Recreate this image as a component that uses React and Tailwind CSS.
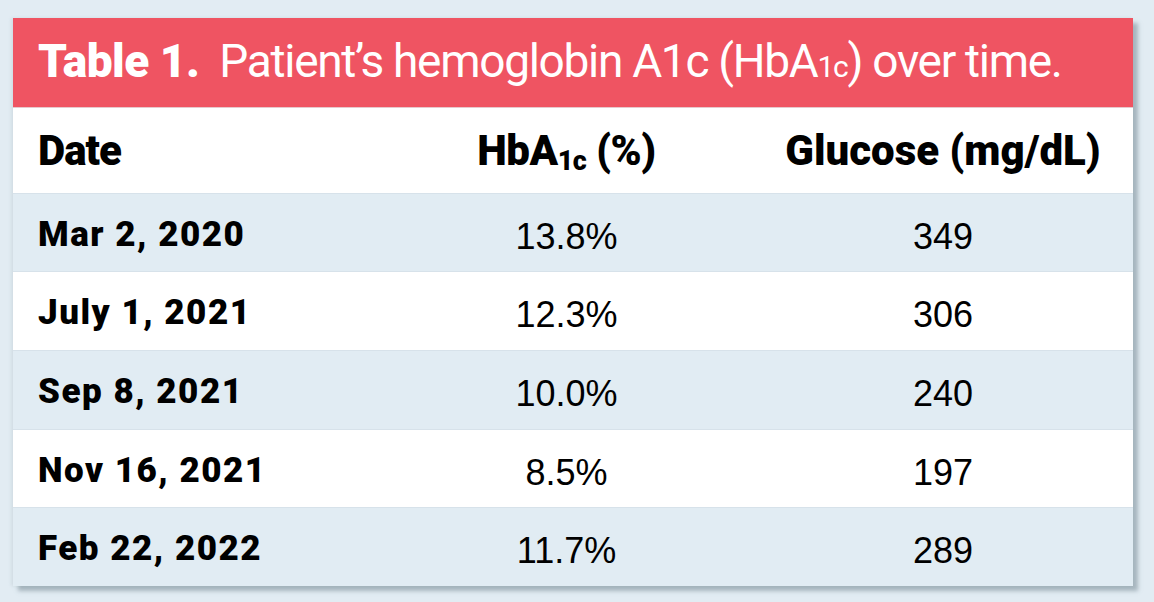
import React from 'react';

const rows = [
  { date: 'Mar 2, 2020', hba1c: '13.8%', glucose: '349', h: 'h-[78px]', bg: 'bg-[#e1ecf3]' },
  { date: 'July 1, 2021', hba1c: '12.3%', glucose: '306', h: 'h-[79px]', bg: 'bg-white' },
  { date: 'Sep 8, 2021', hba1c: '10.0%', glucose: '240', h: 'h-[79px]', bg: 'bg-[#e1ecf3]' },
  { date: 'Nov 16, 2021', hba1c: '8.5%', glucose: '197', h: 'h-[78px]', bg: 'bg-white' },
  { date: 'Feb 22, 2022', hba1c: '11.7%', glucose: '289', h: 'h-[78px]', bg: 'bg-[#e1ecf3]' },
];

const grid = 'grid grid-cols-[342px_373px_380px] items-center pl-[25px]';

export default function App() {
  return (
    <div className="w-[1154px] h-[602px] bg-[#e2ecf3] pt-[18px] pl-[13px] overflow-hidden">
      <div className="w-[1120px] shadow-[5px_5px_4px_rgba(110,130,140,0.5),-2px_0_3px_rgba(120,140,150,0.15)]">
        {/* title bar */}
        <div className="h-[90px] bg-[#ef5462] border-b border-[#e6c9cd] flex items-center pl-[25px] pb-[4px] text-white font-['Roboto',sans-serif] text-[46px] leading-none whitespace-nowrap">
          <span className="font-black tracking-[-0.5px] mr-[20px]">Table 1.</span>
          <span className="font-normal tracking-[-1.3px]">
            Patient’s hemoglobin A1c (HbA<span className="text-[30px]">1c</span>) over time.
          </span>
        </div>

        {/* column heads */}
        <div className={`${grid} h-[86px] bg-white border-b border-[#d7e2ea] font-['Roboto',sans-serif] font-black text-[42px] leading-none text-black`}>
          <div className="tracking-[-1px]">Date</div>
          <div className="text-center tracking-[-0.5px]">
            HbA<span className="text-[27px] relative top-[5px]">1c</span> (%)
          </div>
          <div className="text-center">Glucose (mg/dL)</div>
        </div>

        {rows.map((r) => (
          <div key={r.date} className={`${grid} ${r.h} ${r.bg} border-b border-[#d7e2ea] last:border-b-0 text-black`}>
            <div className="font-['Roboto',sans-serif] font-black text-[35px] tracking-[1.5px] leading-none pt-[3px]">{r.date}</div>
            <div className="text-center font-['Liberation_Sans',sans-serif] text-[36px] leading-none pt-[8px]">{r.hba1c}</div>
            <div className="text-center font-['Liberation_Sans',sans-serif] text-[36px] leading-none pt-[8px]">{r.glucose}</div>
          </div>
        ))}
      </div>
    </div>
  );
}
